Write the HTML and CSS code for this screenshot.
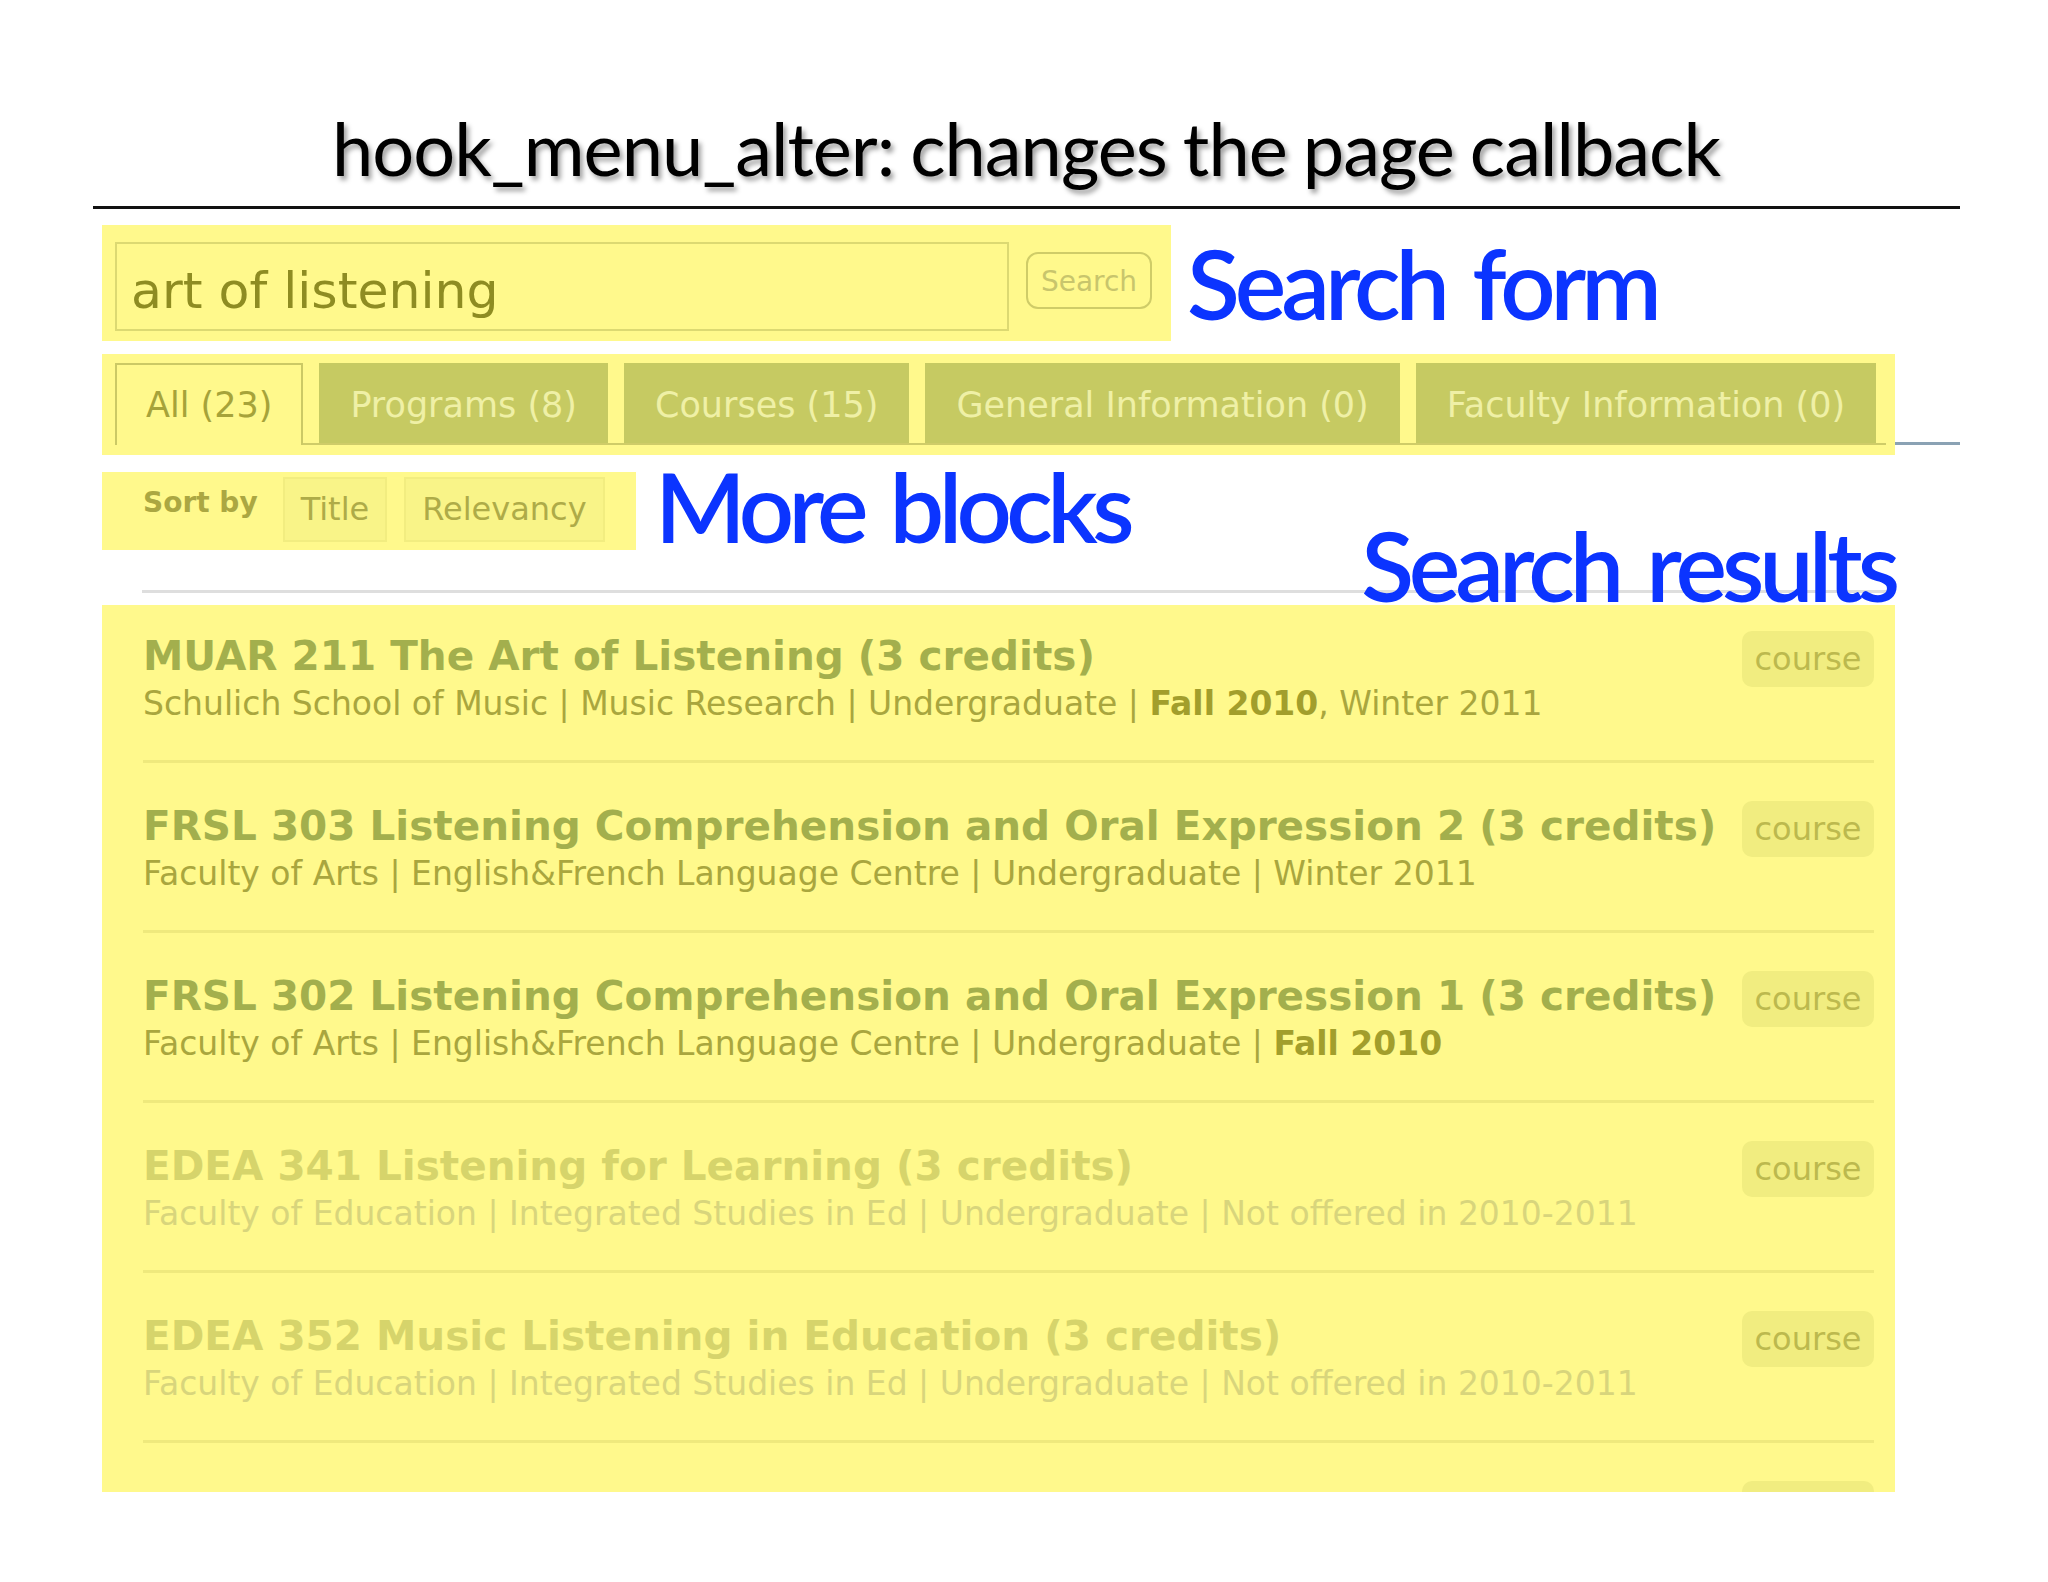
FILE: index.html
```html
<!DOCTYPE html>
<html lang="en">
<head>
<meta charset="utf-8">
<title>hook_menu_alter</title>
<link rel="stylesheet" href="styles.css">
</head>
<body>
<h1 class="slide-title">hook_menu_alter: changes the page callback</h1>
<div class="rule"></div>
<div class="content">
  <div class="block-row search-row">
    <div class="hl search-form">
      <div class="search-input">art of listening</div>
      <div class="search-btn">Search</div>
    </div>
    <div class="label label-form">Search form</div>
  </div>

  <div class="tabs-row">
    <div class="hl tabs">
      <ul class="tab-list">
        <li class="tab active">All (23)</li>
        <li class="tab">Programs (8)</li>
        <li class="tab">Courses (15)</li>
        <li class="tab">General Information (0)</li>
        <li class="tab">Faculty Information (0)</li>
      </ul>
    </div>
    <div class="tabs-line"></div>
  </div>

  <div class="block-row sort-row">
    <div class="hl sort">
      <span class="sort-label">Sort by</span>
      <span class="sort-opt">Title</span>
      <span class="sort-opt">Relevancy</span>
    </div>
    <div class="label label-more">More blocks</div>
  </div>

  <div class="results-wrap">
    <div class="results-rule"></div>
    <div class="label label-results">Search results</div>
    <div class="hl results">
      <div class="result">
        <div class="result-main">
          <div class="r-title">MUAR 211 The Art of Listening (3 credits)</div>
          <div class="r-meta">Schulich School of Music | Music Research | Undergraduate | <b>Fall 2010</b>, Winter 2011</div>
        </div>
        <div class="badge">course</div>
      </div>
      <div class="result">
        <div class="result-main">
          <div class="r-title">FRSL 303 Listening Comprehension and Oral Expression 2 (3 credits)</div>
          <div class="r-meta">Faculty of Arts | English&amp;French Language Centre | Undergraduate | Winter 2011</div>
        </div>
        <div class="badge">course</div>
      </div>
      <div class="result">
        <div class="result-main">
          <div class="r-title">FRSL 302 Listening Comprehension and Oral Expression 1 (3 credits)</div>
          <div class="r-meta">Faculty of Arts | English&amp;French Language Centre | Undergraduate | <b>Fall 2010</b></div>
        </div>
        <div class="badge">course</div>
      </div>
      <div class="result faded">
        <div class="result-main">
          <div class="r-title">EDEA 341 Listening for Learning (3 credits)</div>
          <div class="r-meta">Faculty of Education | Integrated Studies in Ed | Undergraduate | Not offered in 2010-2011</div>
        </div>
        <div class="badge">course</div>
      </div>
      <div class="result faded">
        <div class="result-main">
          <div class="r-title">EDEA 352 Music Listening in Education (3 credits)</div>
          <div class="r-meta">Faculty of Education | Integrated Studies in Ed | Undergraduate | Not offered in 2010-2011</div>
        </div>
        <div class="badge">course</div>
      </div>
      <div class="result faded partial">
        <div class="result-main"></div>
        <div class="badge"></div>
      </div>
    </div>
  </div>
</div>
</body>
</html>
```
FILE: styles.css
```css
* { box-sizing: border-box; }
html, body { margin: 0; padding: 0; background: #fff; }
body {
  width: 2048px;
  height: 1582px;
  overflow: hidden;
  font-family: "DejaVu Sans", Verdana, sans-serif;
}

.slide-title {
  margin: 0;
  padding: 103px 0 0 4px;
  height: 193px;
  line-height: 90px;
  font-family: Lato, "Open Sans", sans-serif;
  font-weight: 400;
  font-size: 74px;
  letter-spacing: -1px;
  word-spacing: -2px;
  text-align: center;
  color: #000;
  text-shadow: 3px 4px 5px rgba(0, 0, 0, 0.38);
}

.rule {
  margin: 13px 0 0 93px;
  width: 1867px;
  height: 3px;
  background: #111;
}

.content {
  margin-left: 102px;
  width: 1858px;
}

.hl { background: #fff98c; }

.block-row {
  display: flex;
  align-items: flex-start;
}

/* Search form */
.search-row { margin-top: 16px; }
.search-form {
  width: 1069px;
  height: 116px;
  padding: 17px 0 0 13px;
  display: flex;
  align-items: flex-start;
  gap: 17px;
}
.search-input {
  width: 894px;
  height: 89px;
  border: 2px solid #dcd972;
  padding: 18px 0 0 14px;
  font-size: 50.5px;
  line-height: 58px;
  color: #8e8c22;
}
.search-btn {
  margin-top: 10px;
  width: 126px;
  height: 57px;
  border: 2px solid #cfcc68;
  border-radius: 12px;
  padding-top: 2px;
  text-align: center;
  font-size: 28px;
  line-height: 51px;
  color: #c8c56c;
}

/* Blue annotation labels */
.label {
  font-family: Lato, "Open Sans", sans-serif;
  font-weight: 600;
  font-size: 97px;
  line-height: 72px;
  letter-spacing: -5px;
  word-spacing: 8px;
  color: #0b34ff;
  white-space: nowrap;
}
.label-form { margin: 22px 0 0 16px; }
.label-more { margin: -2px 0 0 19px; letter-spacing: -5.6px; }

/* Tabs */
.tabs-row {
  display: flex;
  margin-top: 13px;
}
.tabs {
  width: 1793px;
  height: 101px;
  padding: 9px 0 0 13px;
}
.tab-list {
  margin: 0;
  padding: 0;
  list-style: none;
  display: flex;
  gap: 16px;
  height: 82px;
  border-bottom: 2px solid #cfcc68;
  width: 1771px;
}
.tab {
  height: 80px;
  padding: 4px 31px 0;
  font-size: 35px;
  line-height: 76px;
  background: #c6ca62;
  color: #eff0a6;
  white-space: nowrap;
}
.tab.active {
  height: 82px;
  margin-bottom: -2px;
  padding: 2px 29px 0;
  border: 2px solid #cbc965;
  border-bottom: none;
  background: #fff98c;
  color: #a6a33a;
}
.tabs-line {
  width: 65px;
  height: 3px;
  margin-top: 88px;
  background: #8aa2b4;
}

/* Sort */
.sort-row { margin-top: 17px; }
.sort {
  width: 534px;
  height: 78px;
  padding: 5px 0 0 41px;
  display: flex;
  align-items: flex-start;
}
.sort-label {
  font-weight: bold;
  font-size: 28px;
  line-height: 40px;
  margin: 6px 25px 0 0;
  color: #aba742;
}
.sort-opt {
  height: 65px;
  padding: 0 16px;
  margin-right: 17px;
  border: 2px solid #f2ed80;
  background: #f9f488;
  font-size: 32px;
  line-height: 61px;
  color: #aeab48;
}

/* Results */
.results-wrap {
  position: relative;
  width: 1793px;
  margin-top: 40px;
}
.results-rule {
  margin-left: 40px;
  height: 3px;
  background: #dedede;
}
.label-results {
  position: absolute;
  right: 0;
  top: -61px;
}
.results {
  margin-top: 12px;
  height: 887px;
  overflow: hidden;
  padding: 0 21px 0 41px;
}
.result {
  display: flex;
  justify-content: space-between;
  align-items: flex-start;
  height: 170px;
  padding: 38px 0 0;
  border-bottom: 3px solid #efe97d;
}
.result:first-child {
  height: 158px;
  padding-top: 26px;
}
.result-main { white-space: nowrap; }
.r-title {
  font-weight: bold;
  font-size: 40.5px;
  line-height: 50px;
  color: #a3af4d;
}
.r-meta {
  font-size: 33px;
  line-height: 46px;
  color: #a9a63e;
}
.r-meta b { color: #a29e2c; }
.badge {
  flex: none;
  width: 132px;
  height: 56px;
  border-radius: 10px;
  background: #f1ed80;
  color: #bcb94e;
  font-size: 32px;
  line-height: 56px;
  text-align: center;
}
.faded .r-title { color: #d6d46b; }
.faded .r-meta { color: #d8d57c; }
.partial { border-bottom: none; }
```
